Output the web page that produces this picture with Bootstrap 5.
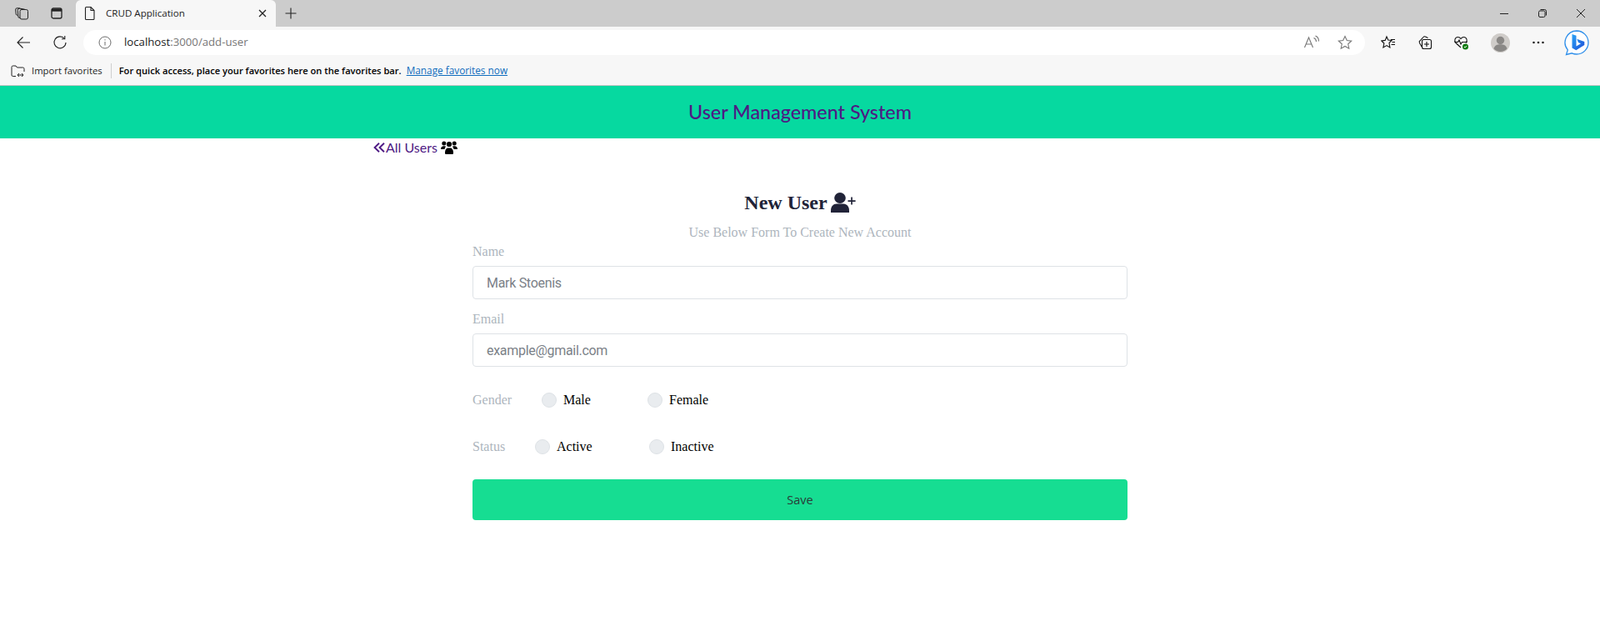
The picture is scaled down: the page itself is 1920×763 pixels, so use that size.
<!DOCTYPE html>
<html lang="en">
<head>
<meta charset="utf-8">
<title>CRUD Application</title>
<link href="https://cdn.jsdelivr.net/npm/bootstrap@5.3.0/dist/css/bootstrap.min.css" rel="stylesheet">
<style>
html,body{height:100%;}
body{background:#fff;font-family:"Liberation Serif",serif;overflow:hidden;}
svg{display:block;}
.ui-font{font-family:"Open Sans","Noto Sans",sans-serif;}
.tabstrip{height:32px;background:#ccc;padding-left:5px;}
.slot{width:42px;flex:none;display:flex;align-items:center;justify-content:center;height:100%;}
.tabitem{width:240px;height:32px;margin-left:2px;background:#f7f7f7;border-radius:6px 6px 0 0;padding:0 10px 0 10px;font-size:11.6px;color:#222;}
.tabtitle{margin-left:12px;flex:1;}
.newtab{width:36px;}
.winbtn{width:46px;}
.toolbar{height:38px;background:#f7f7f7;padding:4px 0 4px 6px;}
.toolslot{width:44px;}
.shift2{margin-left:2px;}
.addr{width:1538px;height:30px;margin-left:6px;margin-right:6px;background:#fff;border-radius:15px;padding:0 0 0 18px;font-size:13.2px;color:#1a1a1a;}
.addr .rest{color:#767676;}
.addrtext{margin-left:15px;flex:1;}
.addr .toolslot{width:40px;}
.favbar{height:33px;background:#f7f7f7;border-bottom:1px solid #c4c4c4;padding-left:13px;font-size:11.3px;color:#1c1c1c;padding-bottom:2px;}
.favsep{width:1px;height:18px;background:#cfcfcf;margin:0 9px 0 10px;}
.favbold{color:#000;font-weight:600;font-size:11.15px;}
.favlink{color:#0f6cbd;margin-left:6px;text-decoration:underline;font-size:11.8px;}
.appbar{height:63px;background:#06d9a0;color:#4e1a84;font-family:"Lato",sans-serif;font-size:23.3px;font-weight:500;}
.wrap{width:1024px;margin:0 auto;}
.backlink{color:#4e1a84;font-family:"Lato",sans-serif;font-size:16px;line-height:22px;text-decoration:none;height:22px;}
.backtext{margin-left:1px;}
.formbox{width:786px;margin:0 auto;}
.formtitle{margin-top:35px;height:36px;font-size:24px;font-weight:700;color:#212338;line-height:36px;}
.formsub{color:#adb5bd;font-size:16px;line-height:20px;margin-top:8px;}
.flabel{color:#adb5bd;font-size:16px;line-height:20px;margin:0;display:block;}
.fieldbox{height:40px;border:1px solid #dee2e6;border-radius:4px;font-family:"Roboto",sans-serif;font-size:16px;padding:0 16px;color:#6c757d;box-shadow:none;}
.fieldbox::placeholder{color:#7b8188;letter-spacing:-.3px;}
.namelabel{margin-top:3px;margin-bottom:7px;}
.maillabel{margin-top:14px;margin-bottom:7px;}
.choicerow{height:20px;font-size:16px;color:#000;}
.gender{margin-top:30px;}
.statusrow{margin-top:36px;}
.choicename{color:#adb5bd;}
.gender .choicename{width:83px;}
.statusrow .choicename{width:75px;}
.dot{width:18px;height:18px;margin:0 8px 0 0;flex:none;background-color:#e9ecef;border:1px solid #dee2e6;border-radius:50%;appearance:none;}
.g1{width:101px;}
.a1{width:111px;}
.savebtn{margin-top:29px;height:49px;background:#16dd92;border:0;border-radius:4px;font-family:"Open Sans",sans-serif;font-size:14.5px;color:#2a3a38;}
.savebtn:hover{background:#16dd92;color:#2a3a38;}
</style>
</head>
<body>

<div class="tabstrip d-flex align-items-center">
  <div class="slot"><svg width="18" height="18" viewBox="0 0 18 18" fill="none" stroke="#222" stroke-width="1"><rect x="7" y="4.500" width="9.500" height="11.500" rx="2"/><path d="M7 14.500 5 13.800 4.200 5.500a2 2 0 0 1 2-2.300l4.500.5 2.500.8"/><path d="M4.300 11.500 2.300 10.500 1.700 5a2 2 0 0 1 2-2.300l3.500.3"/></svg></div>
  <div class="slot"><svg width="16" height="16" viewBox="0 0 16 16" fill="none" stroke="#222" stroke-width="1.300"><rect x="2" y="2" width="12" height="12" rx="2"/><path d="M2 4.200h12" stroke-width="3"/></svg></div>
  <div class="tabitem ui-font d-flex align-items-center">
    <svg width="14" height="18" viewBox="0 0 14 18" fill="none" stroke="#222" stroke-width="1.1"><path d="M2.500 1.500h5.500l4 4v10a1 1 0 0 1-1 1h-8.500a1 1 0 0 1-1-1v-13a1 1 0 0 1 1-1z"/><path d="M8 1.500v4h4"/></svg>
    <span class="tabtitle">CRUD Application</span>
    <svg width="12" height="12" viewBox="0 0 12 12" stroke="#222" stroke-width="1.300"><path d="M2 2l8 8M10 2l-8 8"/></svg>
  </div>
  <div class="slot newtab"><svg width="16" height="16" viewBox="0 0 16 16" stroke="#222" stroke-width="1.100"><path d="M8 1.500v13M1.500 8h13"/></svg></div>
  <div class="slot winbtn ms-auto"><svg width="12" height="12" viewBox="0 0 12 12" stroke="#222"><path d="M1 6.500h10"/></svg></div>
  <div class="slot winbtn"><svg width="12" height="12" viewBox="0 0 12 12" fill="none" stroke="#222"><rect x="1.500" y="3" width="7.500" height="7.500" rx="1.500"/><path d="M3.500 1.500h5a2 2 0 0 1 2 2v5"/></svg></div>
  <div class="slot winbtn"><svg width="12" height="12" viewBox="0 0 12 12" stroke="#222"><path d="M1 1l10 10M11 1 1 11"/></svg></div>
</div>

<div class="toolbar d-flex align-items-center">
  <div class="slot toolslot"><svg width="18" height="18" viewBox="0 0 18 18" fill="none" stroke="#222" stroke-width="1.100"><path d="M17 9H2M8.500 2.500 2 9l6.500 6.500"/></svg></div>
  <div class="slot toolslot"><svg width="18" height="18" viewBox="0 0 18 18" fill="none" stroke="#222" stroke-width="1.100"><path d="M14.500 4.500A7 7 0 1 0 16 9"/><path d="M11 4.800h3.800V1"/></svg></div>
  <div class="addr ui-font d-flex align-items-center">
    <svg width="16" height="16" viewBox="0 0 16 16" fill="none" stroke="#6b6b6b"><circle cx="8" cy="8" r="7"/><path d="M8 7v4.500M8 4.200v1.300"/></svg>
    <span class="addrtext">localhost<span class="rest">:3000/add-user</span></span>
    <div class="slot toolslot"><svg width="20" height="18" viewBox="0 0 20 18" fill="none" stroke="#777" stroke-width="1.100"><path d="M1.500 15 6.500 3l5 12M3.300 11h6.400"/><path d="M12.500 3.500c2 .8 3 2.500 3 4.500M14.500 1c2.500 1 4 3.500 4 6.500"/></svg></div>
    <div class="slot toolslot"><svg width="18" height="18" viewBox="0 0 18 18" fill="none" stroke="#777" stroke-width="1.100"><path d="m9 1.500 2.300 5 5.400.6-4 3.700 1.100 5.400L9 13.500l-4.800 2.700 1.100-5.400-4-3.700 5.400-.6z"/></svg></div>
    <span class="ms-1"></span>
  </div>
  <div class="slot toolslot"><svg width="18" height="18" viewBox="0 0 18 18" fill="none" stroke="#111" stroke-width="1.100"><path d="m7 2 1.800 4 4.200.5-3 3 .9 5.500-3.900-2.400-4.100 2.400 1-5-3-3 4.300-.6z"/><path d="M12 5.500h5M13.500 8.500h3.500M12.500 11.500h4.500"/></svg></div>
  <div class="slot toolslot"><svg width="18" height="18" viewBox="0 0 18 18" fill="none" stroke="#111" stroke-width="1.100"><rect x="5.500" y="5.500" width="11" height="11" rx="2"/><path d="M11 8v6M8 11h6"/><path d="M5 14 2.500 9.500a2 2 0 0 1 .6-2.700L7 2.500a2 2 0 0 1 2.500-.5l3 1.500"/></svg></div>
  <div class="slot toolslot"><svg width="20" height="20" viewBox="0 0 20 20" fill="none"><path d="M9 16 3 10.500C.5 8 2 3.500 5.500 3.500c1.600 0 2.700.8 3.500 2 .8-1.200 2-2 3.500-2 3.500 0 5 4.500 2.500 7" stroke="#111" stroke-width="1.100"/><path d="M1.500 9.500h4l1.500-2.500 2 5 1.500-2.500h6" stroke="#111" stroke-width="1.100"/><circle cx="14.500" cy="15" r="3.500" fill="#107c10"/><path d="m13 15 1.100 1.100 1.900-2" stroke="#fff"/></svg></div>
  <div class="slot toolslot shift2"><svg width="23" height="23" viewBox="0 0 23 23"><circle cx="11.500" cy="11.500" r="11.500" fill="#cfccc9"/><circle cx="11.500" cy="8.500" r="4.700" fill="#8a8886"/><path d="M3.500 18.500c1-4 4-5.200 8-5.200s7 1.200 8 5.200a11 11 0 0 1-16 0z" fill="#8a8886"/></svg></div>
  <div class="slot toolslot shift2"><svg width="16" height="4" viewBox="0 0 16 4" fill="#222"><circle cx="2.500" cy="2" r="1.300"/><circle cx="8" cy="2" r="1.300"/><circle cx="13.500" cy="2" r="1.300"/></svg></div>
  <div class="slot toolslot shift2"><svg width="32" height="32" viewBox="0 0 32 32"><defs><linearGradient id="bg1" x1="0" y1="0" x2="1" y2="1"><stop offset="0" stop-color="#2aa3f5"/><stop offset="1" stop-color="#1d4fd8"/></linearGradient></defs><path d="M16 2a14 14 0 0 1 0 28c-2 0-4-.4-5.700-1.200L3.500 30.500l1.800-5.600A14 14 0 0 1 16 2z" fill="#fff" stroke="#2f8fea" stroke-width="1.300"/><path d="M10.500 6l5 1.800v12.700l5.500-3.200-3-1.400-1.700-4.100 9 3.200v4l-10 6.200-4.800-2.700z" fill="url(#bg1)"/></svg></div>
</div>

<div class="favbar ui-font d-flex align-items-center">
  <svg width="17" height="15" viewBox="0 0 17 15" fill="none" stroke="#222" class="me-2"><path d="M6 13.500H2.500a1.500 1.500 0 0 1-1.500-1.500V2.500A1.500 1.500 0 0 1 2.500 1H6l1.500 2h7a1.500 1.500 0 0 1 1.500 1.500V8"/><path d="M8 12h7M10 10l-2 2 2 2M13 10l2 2-2 2"/></svg>
  <span>Import favorites</span>
  <span class="favsep"></span>
  <span class="favbold">For quick access, place your favorites here on the favorites bar.</span>
  <a class="favlink" href="#">Manage favorites now</a>
</div>

<header class="appbar d-flex align-items-center justify-content-center"><span>User Management System</span></header>

<main class="wrap">
  <a class="backlink d-inline-flex align-items-center" href="#">
    <svg width="14" height="12" viewBox="0 0 14 12" fill="none" stroke="#4e1a84" stroke-width="1.900"><path d="M7 .8 1.600 6 7 11.200M13 .8 7.600 6l5.400 5.200"/></svg>
    <span class="backtext">All Users</span>
    <svg class="ms-1" width="20" height="16" viewBox="0 0 20 16" fill="#000"><circle cx="3.800" cy="3" r="2.500"/><circle cx="16.200" cy="3" r="2.500"/><circle cx="10" cy="4" r="3.100"/><path d="M0 10C0 7.300 1.500 6.200 3.300 6.200h1.200c.7 0 1.200.2 1.600.5C5.200 7.700 4.700 8.700 4.500 10z"/><path d="M20 10c0-2.700-1.500-3.800-3.300-3.800h-1.200c-.7 0-1.200.2-1.600.5.900 1 1.400 2 1.600 3.300z"/><path d="M5 14.500c0-3.500 1.500-6 3.500-6h3c2 0 3.500 2.500 3.500 6 0 1-.6 1.500-1.300 1.500H6.300C5.600 16 5 15.500 5 14.500z"/></svg>
  </a>

  <form class="formbox">
    <div class="formtitle d-flex justify-content-center align-items-center gap-1">
      <span>New User</span>
      <svg width="30" height="24" viewBox="0 0 30 24" fill="#212338"><ellipse cx="11" cy="6.500" rx="6.800" ry="6.500"/><path d="M0 24v-2.500C0 16.500 3 13.500 7 13.500h8c4 0 7 3 7 8V24z"/><path d="M24.200 14.500V11H20.500V9.200h3.700V5.500h1.700v3.700h3.700V11h-3.700v3.500z"/></svg>
    </div>
    <div class="formsub text-center">Use Below Form To Create New Account</div>

    <label class="flabel namelabel" for="nm">Name</label>
    <input id="nm" class="form-control fieldbox" type="text" placeholder="Mark Stoenis">
    <label class="flabel maillabel" for="em">Email</label>
    <input id="em" class="form-control fieldbox" type="email" placeholder="example@gmail.com">

    <div class="choicerow gender d-flex align-items-center">
      <span class="choicename">Gender</span>
      <input class="dot" type="radio" name="g" aria-label="Male"><span class="g1">Male</span>
      <input class="dot" type="radio" name="g" aria-label="Female"><span>Female</span>
    </div>
    <div class="choicerow statusrow d-flex align-items-center">
      <span class="choicename">Status</span>
      <input class="dot" type="radio" name="s" aria-label="Active"><span class="a1">Active</span>
      <input class="dot" type="radio" name="s" aria-label="Inactive"><span>Inactive</span>
    </div>

    <button type="button" class="btn savebtn w-100">Save</button>
  </form>
</main>

<script src="https://cdn.jsdelivr.net/npm/bootstrap@5.3.0/dist/js/bootstrap.bundle.min.js"></script>
</body>
</html>
